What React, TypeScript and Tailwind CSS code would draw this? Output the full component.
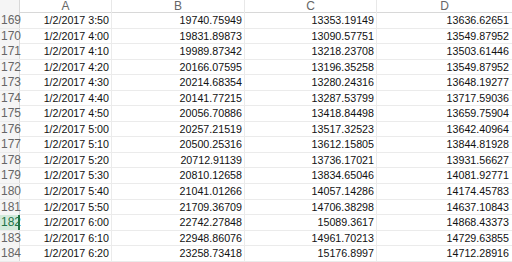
import React from "react";

const rows: [number, string, string, string, string][] = [
  [169, "1/2/2017 3:50", "19740.75949", "13353.19149", "13636.62651"],
  [170, "1/2/2017 4:00", "19831.89873", "13090.57751", "13549.87952"],
  [171, "1/2/2017 4:10", "19989.87342", "13218.23708", "13503.61446"],
  [172, "1/2/2017 4:20", "20166.07595", "13196.35258", "13549.87952"],
  [173, "1/2/2017 4:30", "20214.68354", "13280.24316", "13648.19277"],
  [174, "1/2/2017 4:40", "20141.77215", "13287.53799", "13717.59036"],
  [175, "1/2/2017 4:50", "20056.70886", "13418.84498", "13659.75904"],
  [176, "1/2/2017 5:00", "20257.21519", "13517.32523", "13642.40964"],
  [177, "1/2/2017 5:10", "20500.25316", "13612.15805", "13844.81928"],
  [178, "1/2/2017 5:20", "20712.91139", "13736.17021", "13931.56627"],
  [179, "1/2/2017 5:30", "20810.12658", "13834.65046", "14081.92771"],
  [180, "1/2/2017 5:40", "21041.01266", "14057.14286", "14174.45783"],
  [181, "1/2/2017 5:50", "21709.36709", "14706.38298", "14637.10843"],
  [182, "1/2/2017 6:00", "22742.27848", "15089.3617", "14868.43373"],
  [183, "1/2/2017 6:10", "22948.86076", "14961.70213", "14729.63855"],
  [184, "1/2/2017 6:20", "23258.73418", "15176.8997", "14712.28916"],
];

const cols = "grid grid-cols-[20px_92px_133px_132px_1fr]";

export default function App() {
  return (
    <div className="w-[512px] h-[262px] overflow-hidden bg-white text-[10.7px] text-[#111] font-['Liberation_Sans',Arial,sans-serif]">
      <div className={`${cols} h-[13px] border-b border-[#d8d8d8] text-[#666] text-[12px] leading-[13px]`}>
        <div className="bg-[#f5f5f5] border-r border-[#d8d8d8]" />
        <div className="text-center border-r border-[#e8e8e8]">A</div>
        <div className="text-center border-r border-[#e8e8e8]">B</div>
        <div className="text-center border-r border-[#e8e8e8]">C</div>
        <div className="text-center">D</div>
      </div>
      {rows.map(([n, a, b, c, d]) => {
        const sel = n === 182;
        return (
          <div key={n} className={`${cols} h-[15.55px] leading-[15px] border-b border-[#ebebeb]`}>
            <div
              className={
                sel
                  ? "bg-[#d2eadb] text-[#217346] border-r-2 border-[#217346] pl-[1px] text-[12px]"
                  : "bg-[#f5f5f5] text-[#666] border-r border-[#d8d8d8] pl-[1px] text-[12px]"
              }
            >
              {n}
            </div>
            <div className="text-right pr-[2px] border-r border-[#ebebeb]">{a}</div>
            <div className="text-right pr-[2px] border-r border-[#ebebeb]">{b}</div>
            <div className="text-right pr-[2px] border-r border-[#ebebeb]">{c}</div>
            <div className="text-right pr-[3px]">{d}</div>
          </div>
        );
      })}
    </div>
  );
}
